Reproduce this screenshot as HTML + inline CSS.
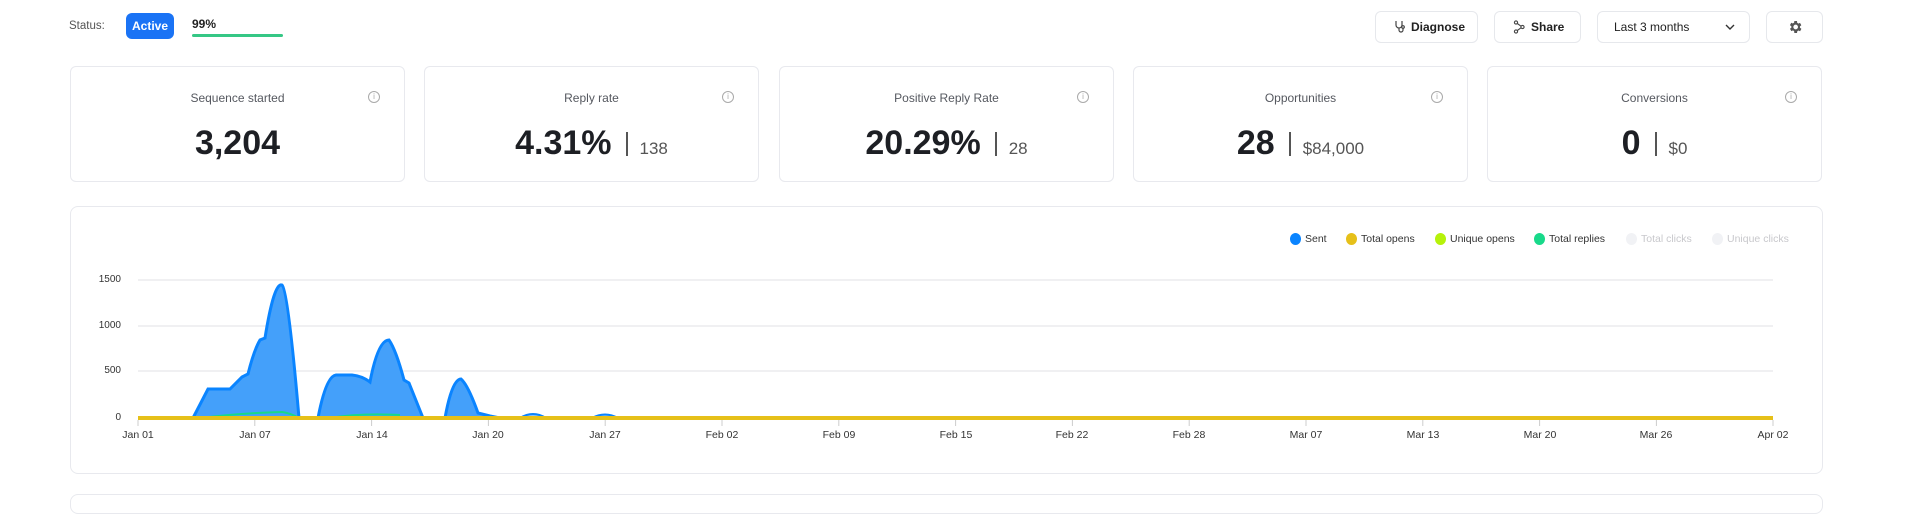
<!DOCTYPE html>
<html><head><meta charset="utf-8"><style>
*{box-sizing:border-box;margin:0;padding:0}
body{width:1920px;height:497px;background:#fff;font-family:"Liberation Sans",sans-serif;position:relative;overflow:hidden;color:#1d1f24}
.abs{position:absolute}
.btn{position:absolute;top:11px;height:32px;border:1px solid #e6e8ec;border-radius:6px;font-size:12px;font-weight:bold;display:flex;align-items:center;color:#222}
.card{position:absolute;top:66px;height:116px;width:335px;border:1px solid #e8e9ee;border-radius:6px}
.card .t{position:absolute;top:24px;left:0;right:0;text-align:center;font-size:12px;color:#55585f}
.card .i{position:absolute;top:24px;right:24px;width:12px;height:12px;border:1px solid #aaa;border-radius:50%;font-size:8px;color:#aaa;text-align:center;line-height:10px}
.card .v{position:absolute;top:57px;left:0;right:0;text-align:center;font-size:34px;font-weight:bold;color:#1d1f24;white-space:nowrap}
.card .v span.sep{display:inline-block;width:2px;height:24px;background:#555;margin:0 12px 0 14px;vertical-align:-2px}
.card .v span.s{font-size:17px;font-weight:normal;color:#555}
.lg{position:absolute;top:233px;font-size:10.5px;color:#333;display:flex;align-items:center}
.lg i{display:inline-block;width:11px;height:12px;border-radius:50%;margin-right:4px}
.xl{position:absolute;top:429px;font-size:10.5px;color:#333;transform:translateX(-50%)}
.yl{position:absolute;right:1799px;font-size:10px;color:#333}
</style></head><body>
<div class="abs" style="left:69px;top:20px;font-size:11.5px;color:#555">Status:</div>
<div class="abs" style="left:126px;top:13px;width:48px;height:26px;background:#1a73f5;border-radius:6px;color:#fff;font-size:12px;font-weight:bold;text-align:center;line-height:26px">Active</div>
<div class="abs" style="left:192px;top:17px;font-size:12px;font-weight:bold;color:#222">99%</div>
<div class="abs" style="left:192px;top:34px;width:91px;height:3px;background:#35c785;border-radius:2px"></div>

<div class="btn" style="left:1375px;width:103px;padding-left:18px"><svg width="12" height="14" viewBox="0 0 12 14" fill="none" stroke="#444" stroke-width="1.2"><path d="M2 1v4a3 3 0 0 0 6 0V1M5 8v2a2 2 0 0 0 4 0V8"/><circle cx="9" cy="7" r="1.3"/></svg><span style="margin-left:5px">Diagnose</span></div>
<div class="btn" style="left:1494px;width:87px;padding-left:18px"><svg width="12" height="14" viewBox="0 0 12 14" fill="none" stroke="#444" stroke-width="1.1"><circle cx="3" cy="2.5" r="1.6"/><circle cx="9.5" cy="7" r="1.6"/><circle cx="3" cy="11.5" r="1.6"/><path d="M4.3 3.5L8 6.2M4.3 10.5L8 7.8"/></svg><span style="margin-left:6px">Share</span></div>
<div class="btn" style="left:1597px;width:153px;padding-left:16px;font-weight:normal">Last 3 months<svg style="position:absolute;right:14px" width="10" height="6" viewBox="0 0 10 6" fill="none" stroke="#333" stroke-width="1.4"><path d="M1 1l4 4 4-4"/></svg></div>
<div class="btn" style="left:1766px;width:57px;justify-content:center"><svg width="16" height="16" viewBox="0 0 24 24"><path fill="#555" d="M19.4 13a7.5 7.5 0 0 0 0-2l2.1-1.6-2-3.5-2.5 1a7 7 0 0 0-1.7-1L15 3h-4l-.4 2.7a7 7 0 0 0-1.700 1l-2.5-1-2 3.5L6.6 11a7.5 7.5 0 0 0 0 2l-2.1 1.6 2 3.5 2.5-1a7 7 0 0 0 1.7 1L11 21h4l.4-2.7a7 7 0 0 0 1.7-1l2.5 1 2-3.5zM13 15.5a3.5 3.5 0 1 1 0-7 3.5 3.5 0 0 1 0 7z"/></svg></div>

<div class="card" style="left:70px"><div class="t">Sequence started</div><div class="i">i</div><div class="v">3,204</div></div>
<div class="card" style="left:424px"><div class="t">Reply rate</div><div class="i">i</div><div class="v">4.31%<span class="sep"></span><span class="s">138</span></div></div>
<div class="card" style="left:779px"><div class="t">Positive Reply Rate</div><div class="i">i</div><div class="v">20.29%<span class="sep"></span><span class="s">28</span></div></div>
<div class="card" style="left:1133px"><div class="t">Opportunities</div><div class="i">i</div><div class="v">28<span class="sep"></span><span class="s">$84,000</span></div></div>
<div class="card" style="left:1487px"><div class="t">Conversions</div><div class="i">i</div><div class="v">0<span class="sep"></span><span class="s">$0</span></div></div>

<div class="abs" style="left:70px;top:206px;width:1753px;height:268px;border:1px solid #e8e9ee;border-radius:8px"></div>
<div class="abs" style="left:70px;top:494px;width:1753px;height:20px;border:1px solid #e8e9ee;border-radius:8px"></div>

<div class="lg" style="left:1290px"><i style="background:#0a84ff"></i>Sent</div>
<div class="lg" style="left:1346px"><i style="background:#e6c019"></i>Total opens</div>
<div class="lg" style="left:1435px"><i style="background:#b6f20a"></i>Unique opens</div>
<div class="lg" style="left:1534px"><i style="background:#18d98a"></i>Total replies</div>
<div class="lg" style="left:1626px;color:#c8c8cc"><i style="background:#f1f2f5"></i>Total clicks</div>
<div class="lg" style="left:1712px;color:#c8c8cc"><i style="background:#f1f2f5"></i>Unique clicks</div>

<div class="yl" style="top:274px">1500</div>
<div class="yl" style="top:320px">1000</div>
<div class="yl" style="top:365px">500</div>
<div class="yl" style="top:412px">0</div>

<svg class="abs" style="left:0;top:0" width="1920" height="497">
<g stroke="#e6e6e9" stroke-width="1.2"><line x1="138" y1="280" x2="1773" y2="280"/><line x1="138" y1="326" x2="1773" y2="326"/><line x1="138" y1="371" x2="1773" y2="371"/></g>
<path d="M193 418 L208 389 L230 389 Q236 383 242 377 L248 374 Q254 350 260 340 L265 338 Q274 282 282 285 Q288 290 299 418 Z" fill="#44a0fa" stroke="#0a84ff" stroke-width="3"/>
<path d="M318 418 Q326 376 336 375 L352 375 Q362 376 370 382 Q378 340 389 340 Q396 350 404 380 L409 383 L423 418 Z" fill="#44a0fa" stroke="#0a84ff" stroke-width="3"/>
<path d="M445 418 Q452 379 461 379 Q468 385 478 413 L490 416 L500 418 Z" fill="#44a0fa" stroke="#0a84ff" stroke-width="3"/>
<path d="M520 418 Q533 410 546 418 M592 418 Q605 411 618 418" fill="#8cc3fb" stroke="#0a84ff" stroke-width="2"/>
<path d="M200 418 Q240 413 282 412 Q290 413 299 418 M330 418 Q360 413 400 415" fill="none" stroke="#18d98a" stroke-width="2"/>
<line x1="138" y1="418" x2="1773" y2="418" stroke="#e6c019" stroke-width="4"/>
<g stroke="#ccc" stroke-width="1">
<line x1="138" y1="420" x2="138" y2="426"/><line x1="254.8" y1="420" x2="254.8" y2="426"/><line x1="371.6" y1="420" x2="371.6" y2="426"/><line x1="488.4" y1="420" x2="488.4" y2="426"/><line x1="605.2" y1="420" x2="605.2" y2="426"/><line x1="722" y1="420" x2="722" y2="426"/><line x1="838.8" y1="420" x2="838.8" y2="426"/><line x1="955.6" y1="420" x2="955.6" y2="426"/><line x1="1072.4" y1="420" x2="1072.4" y2="426"/><line x1="1189.2" y1="420" x2="1189.2" y2="426"/><line x1="1306" y1="420" x2="1306" y2="426"/><line x1="1422.8" y1="420" x2="1422.8" y2="426"/><line x1="1539.6" y1="420" x2="1539.6" y2="426"/><line x1="1656.4" y1="420" x2="1656.4" y2="426"/><line x1="1773" y1="420" x2="1773" y2="426"/>
</g>
</svg>
<div class="xl" style="left:138px">Jan 01</div>
<div class="xl" style="left:255px">Jan 07</div>
<div class="xl" style="left:372px">Jan 14</div>
<div class="xl" style="left:488px">Jan 20</div>
<div class="xl" style="left:605px">Jan 27</div>
<div class="xl" style="left:722px">Feb 02</div>
<div class="xl" style="left:839px">Feb 09</div>
<div class="xl" style="left:956px">Feb 15</div>
<div class="xl" style="left:1072px">Feb 22</div>
<div class="xl" style="left:1189px">Feb 28</div>
<div class="xl" style="left:1306px">Mar 07</div>
<div class="xl" style="left:1423px">Mar 13</div>
<div class="xl" style="left:1540px">Mar 20</div>
<div class="xl" style="left:1656px">Mar 26</div>
<div class="xl" style="left:1773px">Apr 02</div>
</body></html>
